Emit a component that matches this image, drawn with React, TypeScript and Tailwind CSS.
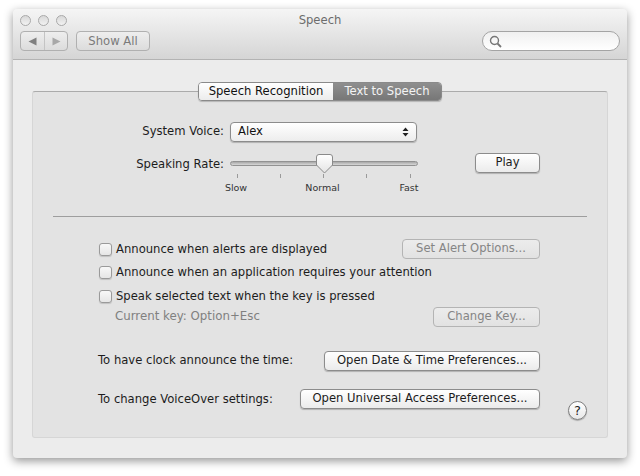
function Light() {
  return <div className="h-[11px] w-[11px] rounded-full border border-[#a9a9a9] bg-gradient-to-b from-[#d8d8d8] to-[#f2f2f2]" />
}

function Btn({ label, width, off }: { label: string; width: string; off?: boolean }) {
  return (
    <div
      className={
        "flex h-[20px] shrink-0 items-center justify-center rounded-[4px] border bg-gradient-to-b pb-px text-[11.6px] " +
        width +
        (off
          ? " border-[#b4b4b4] from-[#ececec] to-[#e2e2e2] text-[#858585]"
          : " border-[#8c8c8c] from-[#ffffff] to-[#ebebeb] text-[#1c1c1c] shadow-[0_1px_1px_rgba(0,0,0,0.22)]")
      }
    >
      {label}
    </div>
  )
}

function Check({ label }: { label: string }) {
  return (
    <div className="flex items-center gap-[4px]">
      <div className="h-[13px] w-[13px] rounded-[3px] border border-[#9a9a9a] bg-gradient-to-b from-[#f8f8f8] to-[#e6e6e6] shadow-[0_1px_1px_rgba(0,0,0,0.15)]" />
      <span className="text-[11.6px] leading-[16px] text-[#1c1c1c]">{label}</span>
    </div>
  )
}

function Tick({ label }: { label?: string }) {
  return (
    <div className="flex w-0 flex-col items-center">
      <div className="h-[4px] w-px shrink-0 bg-[#9a9a9a]" />
      {label && <span className="mt-[3px] -translate-x-px whitespace-nowrap text-[9.5px] leading-[13px] text-[#333]">{label}</span>}
    </div>
  )
}

export default function App() {
  return (
    <div className="h-[476px] w-[640px] overflow-hidden bg-white pl-[13px] pt-[9px] font-['DejaVu_Sans',sans-serif]">
      <div className="flex h-[449px] w-[614px] flex-col overflow-hidden rounded-[4px] bg-[#ececec] shadow-[0_3px_10px_rgba(0,0,0,0.42)]">
        <div className="h-[51px] shrink-0 border-b border-[#b3b3b3] bg-gradient-to-b from-[#f5f5f5] to-[#d5d5d5] px-[7px] pt-[4px]">
          <div className="grid h-[13px] grid-cols-[1fr_auto_1fr] items-center">
            <div className="flex gap-[7px]">
              <Light />
              <Light />
              <Light />
            </div>
            <span className="pt-px text-[11.6px] leading-[13px] text-[#6c6c6c]">Speech</span>
          </div>
          <div className="mt-[5px] flex items-center">
            <div className="flex h-[20px] w-[48px] items-center rounded-[4px] border border-[#b0b0b0] bg-gradient-to-b from-[#eeeeee] to-[#dcdcdc]">
              <div className="flex h-full w-[24px] items-center justify-center border-r border-[#c4c4c4]">
                <svg width="9" height="9" viewBox="0 0 9 9"><path d="M0.5 4.5L8.5 0.5V8.5Z" fill="#808080" /></svg>
              </div>
              <div className="flex flex-1 items-center justify-center">
                <svg width="9" height="9" viewBox="0 0 9 9"><path d="M8.5 4.5L0.5 0.5V8.5Z" fill="#a8a8a8" /></svg>
              </div>
            </div>
            <div className="ml-[8px] flex h-[20px] w-[74px] items-center justify-center rounded-[4px] border border-[#b0b0b0] bg-gradient-to-b from-[#eeeeee] to-[#dcdcdc] pt-px text-[11.6px] text-[#7a7a7a]">
              Show All
            </div>
            <div className="ml-auto flex h-[20px] w-[138px] items-center rounded-full border border-[#a4a4a4] bg-gradient-to-b from-[#f0f0f0] to-[#ffffff] pl-[6px]">
              <svg width="13" height="13" viewBox="0 0 13 13" fill="none" stroke="#777" strokeWidth="1.4">
                <circle cx="5.5" cy="5.5" r="4" />
                <path d="M8.5 8.5L12 12" strokeWidth="1.8" />
              </svg>
            </div>
          </div>
        </div>

        <div className="ml-[19px] mt-[31px] flex h-[347px] w-[576px] flex-col rounded-[3px] border border-[#d6d6d6] border-t-[#ababab] bg-[#e3e3e3]">
          <div className="mx-auto -mt-[10px] flex h-[19px] w-[244px] shrink-0 overflow-hidden rounded-[4px] border border-[#8a8a8a] text-[11.6px] shadow-[0_1px_1px_rgba(0,0,0,0.2)]">
            <div className="flex w-[134px] items-center justify-center bg-gradient-to-b from-[#ffffff] to-[#ececec] text-[#111]">Speech Recognition</div>
            <div className="flex flex-1 items-center justify-center bg-gradient-to-b from-[#8f8f8f] to-[#777777] text-[#f4f4f4]">Text to Speech</div>
          </div>

          <div className="mt-[21px] flex items-center">
            <span className="w-[191px] text-right text-[11.6px] text-[#1c1c1c]">System Voice:</span>
            <div className="ml-[6px] flex h-[20px] w-[187px] items-center justify-between rounded-[4px] border border-[#8c8c8c] bg-gradient-to-b from-[#ffffff] to-[#ededed] pl-[7px] pr-[7px] text-[11.6px] font-medium text-[#111] shadow-[0_1px_1px_rgba(0,0,0,0.22)]">
              Alex
              <svg width="7" height="10" viewBox="0 0 7 10"><path d="M3.5 0.5L6.5 4H0.5ZM3.5 9.5L0.5 6H6.5Z" fill="#222" /></svg>
            </div>
          </div>

          <div className="mt-[11px] flex items-start">
            <span className="mt-[3px] w-[191px] text-right text-[11.6px] leading-[16px] text-[#1c1c1c]">Speaking Rate:</span>
            <div className="ml-[6px] w-[188px]">
              <div className="relative mt-[8px] h-[5px] rounded-full border border-[#929292] bg-gradient-to-b from-[#a8a8a8] to-[#d8d8d8]">
                <svg className="absolute left-[85px] top-[-8px]" width="17" height="20" viewBox="0 0 17 20">
                  <defs>
                    <linearGradient id="knob" x1="0" y1="0" x2="0" y2="1">
                      <stop offset="0" stopColor="#ffffff" />
                      <stop offset="1" stopColor="#e4e4e4" />
                    </linearGradient>
                  </defs>
                  <path d="M3 0.5H14Q16.5 0.5 16.5 3V11L8.5 19L0.5 11V3Q0.5 0.5 3 0.5Z" fill="url(#knob)" stroke="#8a8a8a" />
                </svg>
              </div>
              <div className="mt-[8px] flex justify-between pl-[7px] pr-[8px]">
                <Tick label="Slow" />
                <Tick />
                <Tick label="Normal" />
                <Tick />
                <Tick label="Fast" />
              </div>
            </div>
            <div className="ml-[57px] mt-[0px]">
              <Btn label="Play" width="w-[65px]" />
            </div>
          </div>

          <div className="mx-[20px] mt-[22px] h-px shrink-0 bg-[#9e9e9e]" />

          <div className="mt-[22px] flex items-center justify-between pl-[66px] pr-[67px]">
            <Check label="Announce when alerts are displayed" />
            <Btn label="Set Alert Options..." width="w-[138px]" off />
          </div>
          <div className="mt-[5px] pl-[66px]">
            <Check label="Announce when an application requires your attention" />
          </div>
          <div className="mt-[8px] pl-[66px]">
            <Check label="Speak selected text when the key is pressed" />
          </div>
          <div className="mt-[3px] flex h-[19px] items-start justify-between pl-[82px] pr-[67px]">
            <span className="mt-[1px] text-[11.8px] leading-[16px] text-[#808080]">Current key: Option+Esc</span>
            <Btn label="Change Key..." width="w-[107px]" off />
          </div>

          <div className="mt-[25px] flex items-center justify-between pl-[65px] pr-[67px]">
            <span className="text-[11.6px] text-[#1c1c1c]">To have clock announce the time:</span>
            <Btn label="Open Date &amp; Time Preferences..." width="w-[216px]" />
          </div>
          <div className="mt-[18px] flex items-start pl-[65px]">
            <span className="mt-[2px] w-[202px] text-[11.6px] leading-[16px] text-[#1c1c1c]">To change VoiceOver settings:</span>
            <Btn label="Open Universal Access Preferences..." width="w-[240px]" />
            <div className="ml-[28px] mt-[12px] flex h-[19px] w-[19px] items-center justify-center rounded-full border border-[#7e7e7e] bg-gradient-to-b from-[#ffffff] to-[#e8e8e8] text-[13px] font-medium text-[#222] shadow-[0_1px_1px_rgba(0,0,0,0.25)]">
              ?
            </div>
          </div>
        </div>
      </div>
    </div>
  )
}
